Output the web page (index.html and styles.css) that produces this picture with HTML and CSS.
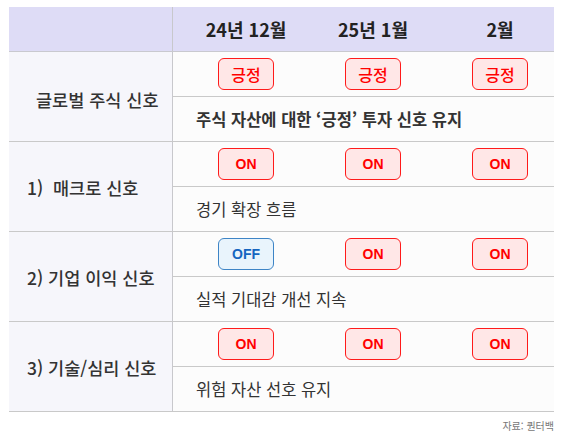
FILE: index.html
```html
<!DOCTYPE html>
<html lang="ko">
<head>
<meta charset="utf-8">
<link rel="stylesheet" href="styles.css">
</head>
<body>
<div class="wrap">
  <div class="table">
    <div class="head">
      <div class="head-label"></div>
      <div class="cols">
        <div class="col">24년 12월</div>
        <div class="col">25년 1월</div>
        <div class="col">2월</div>
      </div>
    </div>

    <div class="section">
      <div class="label label-first">글로벌 주식 신호</div>
      <div class="right">
        <div class="cols badge-row">
          <div class="col"><span class="badge red kr">긍정</span></div>
          <div class="col"><span class="badge red kr">긍정</span></div>
          <div class="col"><span class="badge red kr">긍정</span></div>
        </div>
        <div class="desc strong">주식 자산에 대한 ‘긍정’ 투자 신호 유지</div>
      </div>
    </div>

    <div class="section">
      <div class="label">1)&nbsp; 매크로 신호</div>
      <div class="right">
        <div class="cols badge-row">
          <div class="col"><span class="badge red">ON</span></div>
          <div class="col"><span class="badge red">ON</span></div>
          <div class="col"><span class="badge red">ON</span></div>
        </div>
        <div class="desc">경기 확장 흐름</div>
      </div>
    </div>

    <div class="section">
      <div class="label">2) 기업 이익 신호</div>
      <div class="right">
        <div class="cols badge-row">
          <div class="col"><span class="badge blue">OFF</span></div>
          <div class="col"><span class="badge red">ON</span></div>
          <div class="col"><span class="badge red">ON</span></div>
        </div>
        <div class="desc">실적 기대감 개선 지속</div>
      </div>
    </div>

    <div class="section">
      <div class="label">3) 기술/심리 신호</div>
      <div class="right">
        <div class="cols badge-row">
          <div class="col"><span class="badge red">ON</span></div>
          <div class="col"><span class="badge red">ON</span></div>
          <div class="col"><span class="badge red">ON</span></div>
        </div>
        <div class="desc">위험 자산 선호 유지</div>
      </div>
    </div>
  </div>
  <div class="source">자료: 퀀터백</div>
</div>
</body>
</html>
```

FILE: styles.css
```css
* { box-sizing: border-box; }
html, body { margin: 0; padding: 0; background: #ffffff; }
body {
  font-family: "Noto Sans CJK KR", "Noto Sans", sans-serif;
  color: #333333;
}
.wrap {
  padding: 7px 14px 0 9px;
  width: 568px;
}
.table {
  width: 545px;
  display: flex;
  flex-direction: column;
}
.head {
  display: grid;
  grid-template-columns: 164px 381px;
  height: 45px;
  background: #dedcf6;
  border-bottom: 1px solid #c9c9cf;
}
.head-label {
  border-right: 1px solid #c8c8cc;
}
.cols {
  display: grid;
  grid-template-columns: repeat(3, 127px);
}
.col {
  display: flex;
  align-items: center;
  justify-content: center;
  padding-left: 19px;
}
.head .col {
  font-size: 18px;
  font-weight: 700;
  color: #222222;
}
.section {
  display: grid;
  grid-template-columns: 164px 381px;
  height: 90px;
  border-bottom: 1px solid #c9c9c9;
}
.label {
  background: #f6f6fb;
  border-right: 1px solid #c8c8cc;
  display: flex;
  align-items: center;
  padding-left: 18px;
  font-size: 17.5px;
  font-weight: 500;
  color: #333333;
  padding-top: 1px;
}
.label-first {
  padding-left: 27px;
  padding-top: 6px;
}
.right {
  display: flex;
  flex-direction: column;
  background: #fcfcfc;
}
.badge-row {
  height: 45px;
  border-bottom: 1px solid #c9c9c9;
}
.badge {
  width: 56px;
  height: 32px;
  border-radius: 6px;
  display: flex;
  align-items: center;
  justify-content: center;
  font-family: "Liberation Sans", Arial, sans-serif;
  font-weight: 700;
  font-size: 14px;
}
.badge.kr {
  font-family: "Noto Sans CJK KR", sans-serif;
  font-weight: 500;
  font-size: 16px;
}
.red {
  color: #ff0000;
  background: #ffe7e7;
  border: 1px solid #ff1a1a;
}
.blue {
  color: #1565c0;
  background: #e9f4fc;
  border: 1px solid #3d84c6;
}
.desc {
  height: 44px;
  display: flex;
  align-items: center;
  padding-left: 23px;
  font-size: 16.5px;
  color: #333333;
}
.desc.strong {
  font-weight: 700;
}
.source {
  width: 545px;
  text-align: right;
  font-size: 10px;
  color: #777777;
  margin-top: 7px;
  line-height: 14px;
}
```
